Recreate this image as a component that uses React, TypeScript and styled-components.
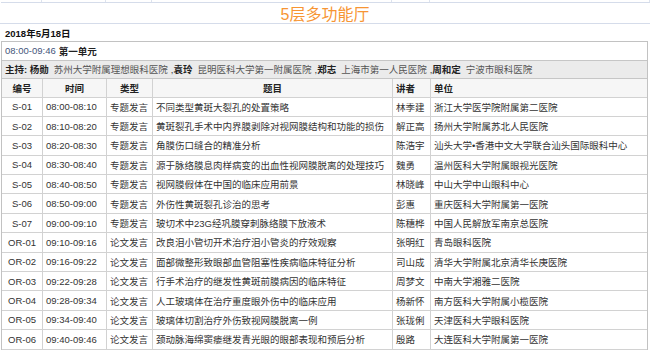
import styled, { createGlobalStyle } from "styled-components";

const GlobalStyle = createGlobalStyle`
  body {
    margin: 0;
    background: #fff;
    font-family: "Liberation Sans", "Noto Sans CJK SC", sans-serif;
    font-size: 9.5px;
    color: #333;
  }
`;

const COLS = "41px 64px 46px 240px 38px 1fr";

const Page = styled.div`
  width: 650px;
  height: 354px;
  overflow: hidden;
`;

const TopStrip = styled.div`
  display: grid;
  grid-template-columns: ${COLS};
  height: 2px;
  margin-left: 1px;
  border-bottom: 1px solid #d5dcea;
`;

const StripCell = styled.div`
  border-right: 1px solid #dde3ee;
`;

const Title = styled.div`
  height: 20px;
  border-bottom: 1px solid #d5dcea;
  display: flex;
  align-items: center;
  justify-content: center;
  font-size: 16px;
  color: #f79533;
`;

const DateLine = styled.div`
  height: 17px;
  display: flex;
  align-items: center;
  padding-left: 5px;
  font-weight: bold;
  color: #111;
`;

const Box = styled.div`
  margin: 0 2px 0 1px;
  border: 1px solid #c2c2c2;
  border-bottom: none;
`;

const Bar = styled.div<{ $shade?: boolean }>`
  height: 17.5px;
  display: flex;
  align-items: center;
  padding-left: 3px;
  border-bottom: 1px solid #c6c6c6;
  background: ${(p) => (p.$shade ? "#ebebeb" : "#fff")};
  white-space: nowrap;
`;

const Time = styled.span`
  color: #44557a;
  margin-right: 3px;
`;

const Strong = styled.b`
  color: #222;
`;

const Org = styled.span`
  color: #555;
  margin: 0 3px 0 5px;
`;

const Row = styled.div<{ $head?: boolean }>`
  display: grid;
  grid-template-columns: ${COLS};
  height: ${(p) => (p.$head ? "17.5px" : "18.4px")};
  border-bottom: 1px solid #d2d2d2;
  background: ${(p) => (p.$head ? "#f6f6f6" : "#fff")};
  font-weight: ${(p) => (p.$head ? "bold" : "normal")};
  color: ${(p) => (p.$head ? "#222" : "#333")};
`;

const Cell = styled.div<{ $center?: boolean }>`
  display: flex;
  align-items: center;
  justify-content: ${(p) => (p.$center ? "center" : "flex-start")};
  padding-left: ${(p) => (p.$center ? "0" : "3px")};
  border-right: 1px solid #d2d2d2;
  white-space: nowrap;
  overflow: hidden;
  &:last-child {
    border-right: none;
  }
`;

const hosts = [
  ["杨勋", "苏州大学附属理想眼科医院"],
  ["袁玲", "昆明医科大学第一附属医院"],
  ["郑志", "上海市第一人民医院"],
  ["周和定", "宁波市眼科医院"],
];

const talks = [
  ["S-01", "08:00-08:10", "专题发言", "不同类型黄斑大裂孔的处置策略", "林季建", "浙江大学医学院附属第二医院"],
  ["S-02", "08:10-08:20", "专题发言", "黄斑裂孔手术中内界膜剥除对视网膜结构和功能的损伤", "解正高", "扬州大学附属苏北人民医院"],
  ["S-03", "08:20-08:30", "专题发言", "角膜伤口缝合的精准分析", "陈浩宇", "汕头大学•香港中文大学联合汕头国际眼科中心"],
  ["S-04", "08:30-08:40", "专题发言", "源于脉络膜息肉样病变的出血性视网膜脱离的处理技巧", "魏勇", "温州医科大学附属眼视光医院"],
  ["S-05", "08:40-08:50", "专题发言", "视网膜假体在中国的临床应用前景", "林晓峰", "中山大学中山眼科中心"],
  ["S-06", "08:50-09:00", "专题发言", "外伤性黄斑裂孔诊治的思考", "彭惠", "重庆医科大学附属第一医院"],
  ["S-07", "09:00-09:10", "专题发言", "玻切术中23G经巩膜穿刺脉络膜下放液术", "陈穗桦", "中国人民解放军南京总医院"],
  ["OR-01", "09:10-09:16", "论文发言", "改良泪小管切开术治疗泪小管炎的疗效观察", "张明红", "青岛眼科医院"],
  ["OR-02", "09:16-09:22", "论文发言", "面部微整形致眼部血管阻塞性疾病临床特征分析", "司山成", "清华大学附属北京清华长庚医院"],
  ["OR-03", "09:22-09:28", "论文发言", "行手术治疗的继发性黄斑前膜病因的临床特征", "周梦文", "中南大学湘雅二医院"],
  ["OR-04", "09:28-09:34", "论文发言", "人工玻璃体在治疗重度眼外伤中的临床应用", "杨新怀", "南方医科大学附属小榄医院"],
  ["OR-05", "09:34-09:40", "论文发言", "玻璃体切割治疗外伤致视网膜脱离一例", "张珑俐", "天津医科大学眼科医院"],
  ["OR-06", "09:40-09:46", "论文发言", "颈动脉海绵窦瘘继发青光眼的眼部表现和预后分析", "殷路", "大连医科大学附属第一医院"],
];

export default function App() {
  return (
    <Page>
      <GlobalStyle />
      <TopStrip>
        {[0, 1, 2, 3, 4, 5].map((i) => (
          <StripCell key={i} />
        ))}
      </TopStrip>
      <Title>5层多功能厅</Title>
      <DateLine>2018年5月18日</DateLine>
      <Box>
        <Bar>
          <Time>08:00-09:46</Time>
          <Strong>第一单元</Strong>
        </Bar>
        <Bar $shade>
          <Strong>主持:&nbsp;</Strong>
          {hosts.map(([name, org], i) => (
            <span key={name}>
              <Strong>{name}</Strong>
              <Org>{org}</Org>
              {i < hosts.length - 1 ? ", " : ""}
            </span>
          ))}
        </Bar>
        <Row $head>
          <Cell $center>编号</Cell>
          <Cell $center>时间</Cell>
          <Cell $center>类型</Cell>
          <Cell $center>题目</Cell>
          <Cell>讲者</Cell>
          <Cell>单位</Cell>
        </Row>
        {talks.map((t) => (
          <Row key={t[0]}>
            <Cell $center>{t[0]}</Cell>
            <Cell>{t[1]}</Cell>
            <Cell>{t[2]}</Cell>
            <Cell>{t[3]}</Cell>
            <Cell>{t[4]}</Cell>
            <Cell>{t[5]}</Cell>
          </Row>
        ))}
      </Box>
    </Page>
  );
}
